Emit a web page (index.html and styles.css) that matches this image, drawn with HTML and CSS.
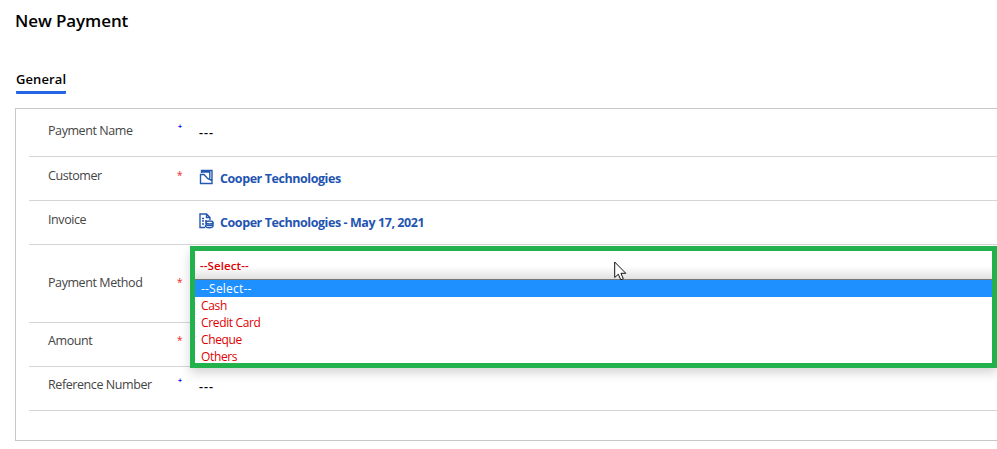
FILE: index.html
```
<!DOCTYPE html>
<html lang="en">
<head>
<meta charset="utf-8">
<title>New Payment</title>
<link rel="stylesheet" href="styles.css">
</head>
<body>
<h1 class="title">New Payment</h1>
<nav class="tabs"><span class="tab">General</span></nav>
<section class="card">
  <div class="row first">
    <span class="label">Payment Name</span><span class="mark blue">+</span>
    <span class="value dashes">---</span>
  </div>
  <div class="row lookup">
    <span class="label">Customer</span><span class="mark">*</span>
    <span class="value link">
      <svg class="icon" width="16" height="16" viewBox="0 0 16 16"><path d="M2.500 4V1.500H13V14.500H1.500V5.500H5L8.500 9.500L13 11.500M2.500 3H10.800V9.500"/></svg>
      <span>Cooper Technologies</span>
    </span>
  </div>
  <div class="row lookup">
    <span class="label">Invoice</span><span class="mark"></span>
    <span class="value link">
      <svg class="icon" width="16" height="16" viewBox="0 0 16 16"><path d="M6 14.500H1V1H7.500L11 4.500V7M7.500 1V4.500H11M3 5.500H5M3 8H5M6 8H8M3 11H5"/><ellipse cx="10.500" cy="9.500" rx="3.500" ry="1.500"/><path d="M7 9.500V11C7 13 14 13 14 11V9.500M6.500 12V13C6.500 15.300 14 15.300 14 13V11"/></svg>
      <span>Cooper Technologies - May 17, 2021</span>
    </span>
  </div>
  <div class="row tall">
    <span class="label">Payment Method</span><span class="mark">*</span>
    <div class="picker">
      <div class="current">--Select--</div>
      <ul class="options">
        <li class="active">--Select--</li>
        <li>Cash</li>
        <li>Credit Card</li>
        <li>Cheque</li>
        <li>Others</li>
      </ul>
      <svg class="cursor" width="13" height="20" viewBox="0 0 13 20"><path d="M.7 1V16.500L4.300 13.200L6.800 18.800L9.300 17.700L6.900 12.300H11.800Z"/></svg>
    </div>
  </div>
  <div class="row">
    <span class="label">Amount</span><span class="mark">*</span>
  </div>
  <div class="row">
    <span class="label">Reference Number</span><span class="mark blue">+</span>
    <span class="value dashes">---</span>
  </div>
</section>
</body>
</html>
```
FILE: styles.css
```
* { box-sizing: border-box; }
body {
  margin: 0;
  height: 449px;
  overflow: hidden;
  background: #fff;
  color: #444;
  font: 12.5px/18px "Open Sans", "Noto Sans", sans-serif;
  white-space: nowrap;
}
.title {
  margin: 0;
  padding: 8px 0 0 15px;
  height: 70px;
  color: #000;
  font-size: 17px;
  font-weight: 600;
  line-height: 25px;
  letter-spacing: -.1px;
}
.tabs { height: 38px; padding-left: 16px; display: flex; }
.tab {
  width: 50px;
  height: 24px;
  border-bottom: 3px solid #2266e3;
  border-radius: 1px;
  color: #000;
  font-size: 13px;
  font-weight: 600;
  letter-spacing: .1px;
}
.card {
  height: 333px;
  margin-left: 15px;
  padding-left: 13px;
  border: 1px solid #c8c8c8;
  border-right: 0;
}
.row {
  position: relative;
  display: flex;
  height: 44px;
  padding: 9px 0 0 19px;
  border-bottom: 1px solid #d5d5d5;
}
.row.lookup { padding-top: 10px; }
.row.first { height: 48px; padding-top: 13px; }
.row.tall { height: 78px; padding-top: 29px; }
.label { width: 129px; letter-spacing: -.42px; }
.mark { width: 22px; color: #e22; font-size: 10px; line-height: 16px; }
.mark.blue { padding-left: 1px; color: #00f; font-size: 7px; font-weight: 700; line-height: 10px; }
.value { display: flex; padding-top: 3px; }
.dashes { padding-top: 2px; color: #000; font-weight: 600; letter-spacing: 1px; }
.link { color: #1f55b0; font-weight: 700; letter-spacing: -.43px; }
.icon { width: 16px; margin-right: 5px; margin-top: -1px; fill: none; stroke: #2458b0; stroke-width: 1.4; }
.picker {
  position: absolute;
  z-index: 1;
  left: 161px;
  top: 1px;
  width: 807px;
  height: 122px;
  border: 5px solid #22b14c;
  background: #fff;
  box-shadow: 0 5px 10px rgba(0, 0, 0, .17);
}
.current {
  height: 28px;
  padding: 6px 0 0 5px;
  background: linear-gradient(#fff 55%, #e0e0e0);
  color: #d00;
  font-size: 11.5px;
  font-weight: 600;
  letter-spacing: .1px;
}
.options { margin: 0; padding: 0; list-style: none; border-top: 1px solid #767676; }
.options li { height: 17px; padding-left: 6px; color: #e00000; font-size: 12px; line-height: 17px; letter-spacing: -.35px; }
.options .active { background: #1e90ff; color: #fff; letter-spacing: .2px; }
.cursor { position: absolute; left: 419px; top: 10px; fill: #fff; stroke: #111; stroke-width: 1; }
```
